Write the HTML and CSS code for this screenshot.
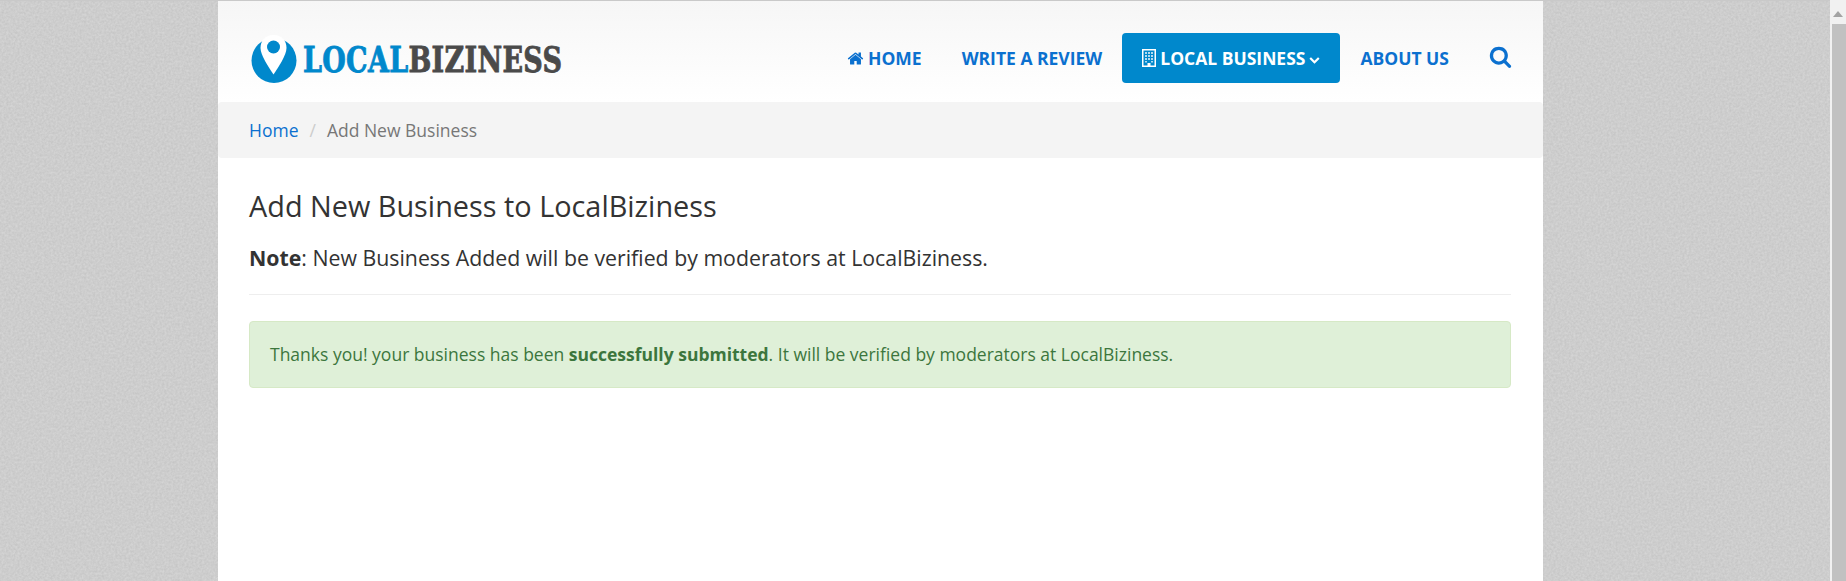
FILE: index.html
```html
<!DOCTYPE html>
<html lang="en">
<head>
    <meta charset="UTF-8">
    <meta name="viewport" content="width=device-width, initial-scale=1.0">
    <title>Add New Business</title>
    <link rel="stylesheet" href="styles.css">
</head>
<body>
    <div class="page">
        <div class="container">
            <!-- header -->
            <header class="header">
                <a class="logo" href="#">
                    <svg class="logo-mark" viewBox="0 0 46 48" xmlns="http://www.w3.org/2000/svg">
                        <circle cx="23" cy="25.5" r="22.5" fill="#0088cc"/>
                        <path d="M22.5 0C14 0 9.5 6 9.5 13C9.5 20 18 33 22.5 39.5C27 33 35.500 20 35.500 13C35.500 6 31 0 22.500 0Z" fill="#fff"/>
                        <circle cx="22.500" cy="12" r="6.500" fill="#0088cc"/>
                    </svg>
                    <span class="logo-text"><span class="logo-local">LOCAL</span><span class="logo-biz">BIZINESS</span></span>
                </a>
                <nav class="nav">
                    <a class="nav-link" href="#">
                        <svg class="icon" viewBox="0 0 1792 1792" xmlns="http://www.w3.org/2000/svg"><path d="M1472 992v480q0 26-19 45t-45 19h-384v-384h-256v384h-384q-26 0-45-19t-19-45v-480q0-1 .5-3t.5-3l575-474 575 474q1 2 1 6zm223-69l-62 74q-8 9-21 11h-3q-13 0-21-7l-692-577-692 577q-12 8-24 7-13-2-21-11l-62-74q-8-10-7-23.5t11-21.5l719-599q32-26 76-26t76 26l244 204v-195q0-14 9-23t23-9h192q14 0 23 9t9 23v408l219 182q10 8 11 21.5t-7 23.5z"/></svg>
                        <span>HOME</span>
                    </a>
                    <a class="nav-link" href="#"><span>WRITE A REVIEW</span></a>
                    <a class="nav-link active" href="#">
                        <svg class="icon-building" viewBox="0 0 14 18" xmlns="http://www.w3.org/2000/svg">
                            <path fill-rule="evenodd" d="M0 0H14V18H0ZM1.500 1.500V16.500H5.500V14H8.500V16.500H12.500V1.500Z"/>
                            <path d="M3 3h2v2H3zM6 3h2v2H6zM9 3h2v2H9zM3 6h2v2H3zM6 6h2v2H6zM9 6h2v2H9zM3 9h2v2H3zM6 9h2v2H6zM9 9h2v2H9zM3 12h2v1.500H3zM9 12h2v1.500H9z" opacity="0.7"/>
                        </svg>
                        <span>LOCAL BUSINESS</span>
                        <svg class="icon-caret" viewBox="0 0 1792 1792" xmlns="http://www.w3.org/2000/svg"><path d="M1683 808l-742 741q-19 19-45 19t-45-19l-742-741q-19-19-19-45.500t19-45.500l166-165q19-19 45-19t45 19l531 531 531-531q19-19 45-19t45 19l166 165q19 19 19 45.500t-19 45.500z"/></svg>
                    </a>
                    <a class="nav-link" href="#"><span>ABOUT US</span></a>
                    <a class="nav-search" href="#">
                        <svg viewBox="0 0 1792 1792" xmlns="http://www.w3.org/2000/svg"><path d="M1216 832q0-185-131.500-316.500t-316.500-131.500-316.500 131.500-131.500 316.500 131.500 316.500 316.500 131.500 316.500-131.500 131.500-316.500zm512 832q0 52-38 90t-90 38q-54 0-90-38l-343-342q-179 124-399 124-143 0-273.500-55.500t-225-150-150-225-55.500-273.500 55.500-273.500 150-225 225-150 273.500-55.500 273.500 55.500 225 150 150 225 55.500 273.500q0 220-124 399l343 343q37 37 37 90z"/></svg>
                    </a>
                </nav>
            </header>

            <!-- breadcrumb -->
            <ol class="breadcrumb">
                <li><a href="#">Home</a></li>
                <li class="sep">/</li>
                <li class="current">Add New Business</li>
            </ol>

            <main class="content">
                <h3 class="title">Add New Business to LocalBiziness</h3>
                <p class="note"><strong>Note</strong>: New Business Added will be verified by moderators at LocalBiziness.</p>
                <hr class="rule">
                <div class="alert">Thanks you! your business has been <strong>successfully submitted</strong>. It will be verified by moderators at LocalBiziness.</div>
            </main>
        </div>
    </div>

    <div class="scrollbar">
        <div class="scroll-up"></div>
        <div class="scroll-thumb"></div>
    </div>
</body>
</html>
```

FILE: styles.css
```css
html, body {
    height: 100%;
}

body {
    margin: 0;
    display: flex;
    overflow: hidden;
    font-family: "Open Sans", Arial, sans-serif;
    color: #333;
    background-color: #cecece;
}

a {
    text-decoration: none;
}

.page {
    flex: 1;
    padding-left: 218px;
    border-top: 1px solid #c9c9c9;
    background-color: #cecece;
    /* grainy paper texture */
    background-image: url("data:image/svg+xml,%3Csvg xmlns='http://www.w3.org/2000/svg' width='256' height='256'%3E%3Cfilter id='n' color-interpolation-filters='sRGB'%3E%3CfeTurbulence type='fractalNoise' baseFrequency='0.45' numOctaves='2' stitchTiles='stitch'/%3E%3CfeColorMatrix values='0.09 0 0 0 0.76 0.09 0 0 0 0.76 0.09 0 0 0 0.76 0 0 0 0 1'/%3E%3C/filter%3E%3Crect width='256' height='256' filter='url(%23n)'/%3E%3C/svg%3E");
}

.container {
    width: 1325px;
    height: 100%;
    background-color: #fff;
}

.header {
    height: 86px;
    padding: 15px 31px 0 32px;
    display: flex;
    justify-content: space-between;
    align-items: center;
    background: linear-gradient(to bottom, #f6f6f6, #fff);
}

.logo {
    display: flex;
    align-items: center;
}

.logo-mark {
    width: 46px;
    height: 48px;
    margin-left: 1px;
}

.logo-text {
    display: inline-block;
    margin-left: 6px;
    font-family: "DejaVu Serif", "Liberation Serif", serif;
    font-weight: bold;
    font-size: 36px;
    line-height: 34px;
    letter-spacing: 0.4px;
    -webkit-text-stroke: 0.9px;
    transform: scaleX(0.75);
    transform-origin: left center;
}

.logo-local {
    color: #0088cc;
}

.logo-biz {
    color: #4a4a4a;
}

.nav {
    display: flex;
    align-items: center;
    margin-top: -2px;
}

.nav-link {
    display: flex;
    align-items: center;
    height: 50px;
    padding: 0 20px;
    border-radius: 4px;
    font-size: 17.5px;
    font-weight: bold;
    color: #0b70cf;
    white-space: nowrap;
}

.nav-link .icon {
    width: 17px;
    height: 17px;
    margin-right: 4px;
    fill: #0b70cf;
}

.nav-link.active {
    color: #fff;
    background-color: #0088cc;
}

.icon-building {
    width: 14px;
    height: 18px;
    margin-right: 4px;
    fill: #fff;
}

.icon-caret {
    width: 11px;
    height: 11px;
    margin-left: 4px;
    margin-top: 2px;
    fill: #fff;
}

.nav-search {
    display: flex;
    margin-left: 20px;
    margin-top: -3px;
}

.nav-search svg {
    width: 23px;
    height: 23px;
    fill: #0b70cf;
}

.breadcrumb {
    display: flex;
    align-items: center;
    gap: 11px;
    height: 56px;
    margin: 0 0 1px;
    padding: 0 31px;
    list-style: none;
    border-radius: 4px;
    background-color: #f4f4f4;
    font-size: 17.500px;
}

.breadcrumb a {
    color: #0b70cf;
}

.sep {
    color: #ccc;
}

.current {
    color: #777;
}

.content {
    padding: 0 32px 0 31px;
}

.title {
    margin: 29px 0 0;
    font-size: 28.850px;
    line-height: 38px;
    font-weight: normal;
    color: #333;
}

.note {
    margin: 19px 0 0;
    font-size: 21.300px;
    line-height: 28px;
}

.rule {
    margin: 22px 0 0;
    border: 0;
    border-top: 1px solid #eee;
}

.alert {
    margin-top: 26px;
    padding: 20px;
    border: 1px solid #d6e9c6;
    border-radius: 4px;
    background-color: #dff0d8;
    color: #3c763d;
    font-size: 17.500px;
    line-height: 25px;
}

.scrollbar {
    width: 16px;
    display: flex;
    flex-direction: column;
    background-color: #f1f1f1;
}

.scroll-up {
    height: 24px;
    display: flex;
    justify-content: center;
    background-color: #f1f1f1;
}

.scroll-up::before {
    content: "";
    margin-top: 11px;
    border-left: 5px solid transparent;
    border-right: 5px solid transparent;
    border-bottom: 6px solid #a3a3a3;
    height: 0;
}

.scroll-thumb {
    flex: 1;
    margin-left: 2px;
    background-color: #c1c1c1;
}
```
